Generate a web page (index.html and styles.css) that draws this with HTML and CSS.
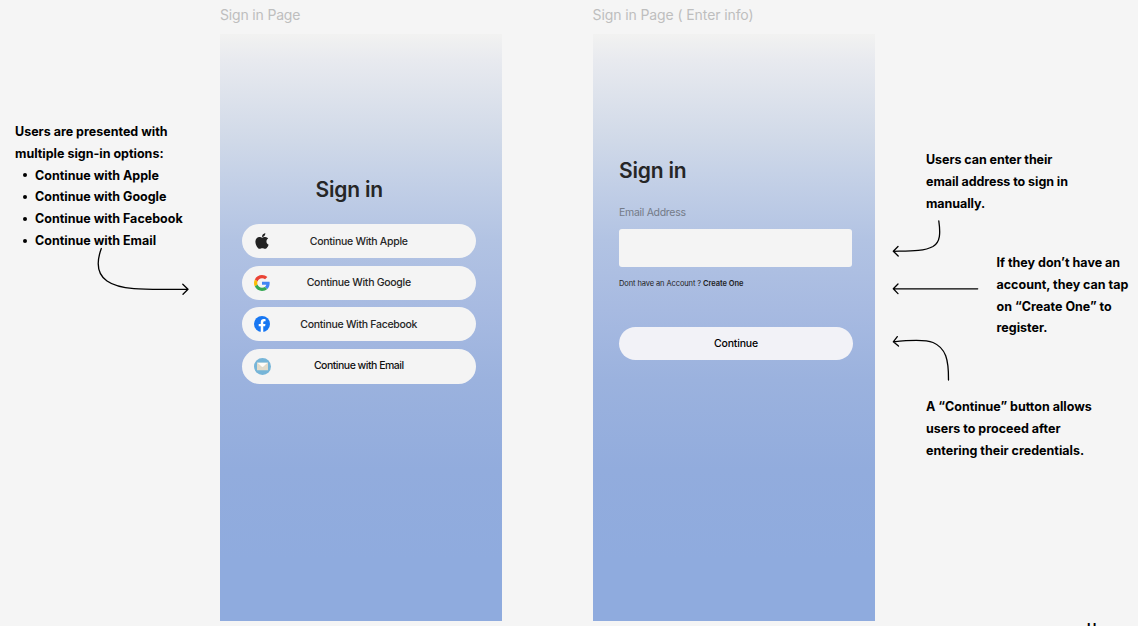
FILE: index.html
```html
<!DOCTYPE html>
<html lang="en">
<head>
<meta charset="utf-8">
<title>Sign in flow</title>
<link rel="stylesheet" href="styles.css">
</head>
<body>
<main class="board">
  <section class="frame frame-options">
    <h2 class="frame-label">Sign in Page</h2>
    <div class="screen screen-options">
      <h1 class="title">Sign in</h1>
      <div class="providers">
        <button class="pill"><svg class="icon apple" viewBox="0 0 384 512"><path fill="#222" d="M318.7 268.7c-.2-36.7 16.4-64.4 50-84.8-18.800-26.900-47.200-41.700-84.700-44.600-35.500-2.800-74.300 20.700-88.500 20.700-15 0-49.400-19.700-76.400-19.700C63.300 141.200 4 184.800 4 273.500q0 39.300 14.400 81.200c12.800 36.700 59 126.700 107.200 125.200 25.200-.6 43-17.900 75.800-17.900 31.800 0 48.300 17.900 76.400 17.900 48.600-.7 90.400-82.500 102.600-119.300-65.200-30.700-61.700-90-61.700-91.900zM262.100 104.500c27.300-32.400 24.800-61.900 24-72.500-24.100 1.400-52 16.400-67.900 34.900-17.500 19.800-27.800 44.300-25.600 71.900 26.100 2 49.900-11.400 69.500-34.300z"/></svg><span>Continue With Apple</span></button>
        <button class="pill"><svg class="icon google" viewBox="0 0 48 48"><path fill="#EA4335" d="M24 9.500c3.540 0 6.710 1.220 9.210 3.600l6.850-6.850C35.900 2.380 30.470 0 24 0 14.620 0 6.510 5.380 2.560 13.220l7.980 6.190C12.430 13.720 17.740 9.500 24 9.500z"/><path fill="#4285F4" d="M46.980 24.550c0-1.570-.15-3.090-.38-4.550H24v9.020h12.940c-.58 2.960-2.260 5.480-4.780 7.180l7.730 6c4.510-4.180 7.090-10.360 7.090-17.650z"/><path fill="#FBBC05" d="M10.530 28.590c-.48-1.450-.76-2.990-.76-4.590s.27-3.140.76-4.590l-7.980-6.190C.92 16.460 0 20.120 0 24s.92 7.540 2.560 10.780l7.970-6.190z"/><path fill="#34A853" d="M24 48c6.480 0 11.930-2.130 15.890-5.810l-7.730-6c-2.150 1.450-4.920 2.300-8.160 2.300-6.260 0-11.570-4.220-13.470-9.910l-7.980 6.190C6.510 42.620 14.620 48 24 48z"/></svg><span>Continue With Google</span></button>
        <button class="pill"><svg class="icon" viewBox="0 0 24 24"><circle cx="12" cy="12" r="12" fill="#1877f2"/><path fill="#fff" d="M16.670 15.470l.53-3.470h-3.330V9.750c0-.95.47-1.880 1.960-1.880h1.510V4.920s-1.370-.24-2.690-.24c-2.740 0-4.530 1.670-4.530 4.670V12H7.080v3.470h3.040V24h3.750v-8.530z"/></svg><span>Continue With Facebook</span></button>
        <button class="pill pill-email"><svg class="icon mail" viewBox="0 0 34 34"><circle cx="17" cy="17" r="17" fill="#76b5d8"/><path fill="#e2dccb" d="M6 9.500h22v15H6z"/><path fill="#fffdf8" d="M6 9.500h22L18.500 18q-1.500 1.300-3 0z"/><path fill="none" stroke="#cfc9b8" stroke-width=".8" d="M6 9.500l9.500 8.500q1.500 1.300 3 0L28 9.500"/></svg><span>Continue with Email</span></button>
      </div>
    </div>
  </section>

  <section class="frame frame-form">
    <h2 class="frame-label label-form">Sign in Page ( Enter info)</h2>
    <div class="screen screen-form">
      <h1 class="title">Sign in</h1>
      <label class="field-label" for="email">Email Address</label>
      <input class="field" id="email" type="email">
      <p class="hint">Dont have an Account ? <b>Create One</b></p>
      <button class="pill pill-continue"><span>Continue</span></button>
    </div>
  </section>

  <div class="note note-options">Users are presented with<br>multiple sign-in options:
    <ul>
      <li>Continue with Apple</li>
      <li>Continue with Google</li>
      <li>Continue with Facebook</li>
      <li>Continue with Email</li>
    </ul>
  </div>
  <p class="note note-email">Users can enter their<br>email address to sign in<br>manually.</p>
  <p class="note note-create">If they don’t have an<br>account, they can tap<br>on “Create One” to<br>register.</p>
  <p class="note note-continue">A “Continue” button allows<br>users to proceed after<br>entering their credentials.</p>
  <p class="note note-home">Home</p>

  <svg class="arrows" viewBox="0 0 1138 626">
    <path d="M101.300 248.500C96 263 97 274 107 281C121 291 149 289.500 188 289.200M182.800 284.300L188 289.200L183 294.200"/>
    <path d="M938.800 221C940.500 233 940.500 242 933 246.500C924 251.500 909 251 893.500 251.300M898 246.500L893.300 251.300L898.200 256"/>
    <path d="M977.700 288.800H893.300M898 284L893.300 288.800L898 293.600"/>
    <path d="M948.500 380C948.700 360 946 348 933 342.500C926 339.500 910 340 893.300 341.800M897.300 336.600L893.300 341.800L898.500 346"/>
  </svg>
</main>
</body>
</html>
```
FILE: styles.css
```css
* { box-sizing: border-box; }
body { margin: 0; overflow: hidden; background: #f5f5f5; font-family: Inter, "Liberation Sans", sans-serif; }
h1, h2, p, ul { margin: 0; padding: 0; }
.board { position: relative; width: 1138px; height: 626px; overflow: hidden; }
.frame { position: absolute; top: 0; width: 282px; }
.frame-options { left: 220px; }
.frame-form { left: 592.500px; }
.frame-label { height: 34px; padding-top: 6px; font-size: 14px; line-height: 18px; font-weight: 400; letter-spacing: -.17px; color: #bebebe; white-space: nowrap; }
.label-form { letter-spacing: -.1px; }
.screen {
  display: flex; flex-direction: column; height: 586.500px;
  background: linear-gradient(#f2f2f1 0, #e8eaef 26px, #d0d9e8 106px, #c6d2e7 137px, #b2c3e3 206px, #a7bae1 276px, #9bb2de 346px, #92acdd 436px, #8fabde 526px);
}
.screen-options { padding: 143px 26.500px 0 22px; }
.screen-form { padding: 124px 21.500px 0 26.500px; }
.title { font-size: 21px; line-height: 26px; font-weight: 600; letter-spacing: -.2px; color: #262626; white-space: nowrap; }
.screen-options .title { align-self: center; margin-right: 19px; }
.providers { display: flex; flex-direction: column; gap: 7.500px; margin-top: 21px; }
.pill {
  display: flex; align-items: center; justify-content: center; position: relative; flex: none;
  width: 233.500px; height: 34px; padding: 0; border: 0; border-radius: 18px; background: #f4f4f4;
  font: 500 10.500px/16px Inter, sans-serif; letter-spacing: -.29px; color: #262626; white-space: nowrap;
}
.pill:not(.pill-continue) span { padding-top: 1px; }
.pill-email { height: 35.500px; letter-spacing: -.5px; color: #111; }
.pill.pill-email span { padding-top: 0; }
.pill-continue { width: 234px; height: 33.500px; margin-top: 37.500px; letter-spacing: -.2px; background: #f2f2f7; color: #000; }
.pill-continue span { padding-top: 1px; }
.icon { position: absolute; left: 12px; top: 9px; width: 16px; height: 16px; }
.apple { left: 12px; top: 8px; width: 16px; height: 18px; }
.mail { top: 9px; width: 17px; height: 17px; }
.field-label { margin-top: 21.500px; font-size: 10.500px; line-height: 14px; letter-spacing: -.3px; color: #747b88; }
.field { width: 233px; height: 38px; margin-top: 9.500px; padding: 0 8px; border: 0; border-radius: 3px; background: #f4f4f4; }
.hint { margin-top: 11px; font-size: 7.500px; line-height: 11px; letter-spacing: -.1px; color: #222; white-space: nowrap; }
.hint b { font-weight: 600; letter-spacing: -.05px; }
.note { position: absolute; font-size: 12.500px; line-height: 21.800px; font-weight: 700; color: #000; white-space: nowrap; }
.note ul { list-style: none; }
.note li { display: flex; align-items: center; gap: 8px; padding-left: 8px; }
.note li::before { content: ""; width: 4px; height: 4px; border-radius: 50%; background: #000; }
.note-options { left: 15px; top: 121px; }
.note-email { left: 926px; top: 149px; letter-spacing: -.06px; }
.note-create { left: 996.500px; top: 252px; }
.note-continue { left: 926px; top: 396px; }
.note-home { left: 1087px; top: 618px; }
.arrows { position: absolute; inset: 0; width: 1138px; height: 626px; fill: none; stroke: #000; stroke-width: 1.300; stroke-linecap: round; stroke-linejoin: round; pointer-events: none; }
```
